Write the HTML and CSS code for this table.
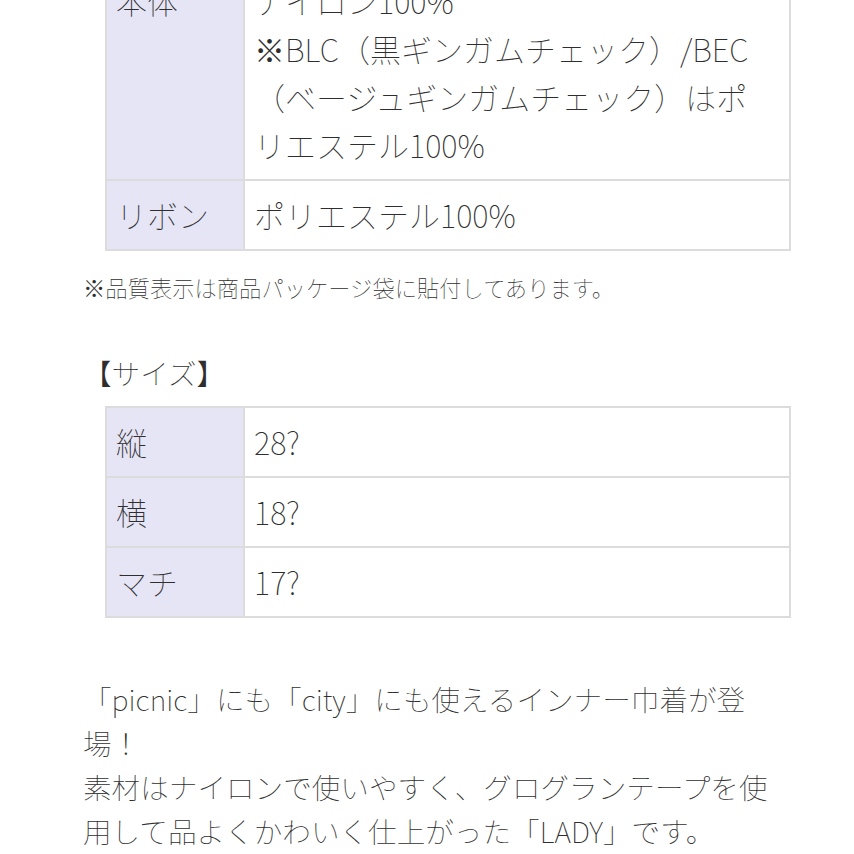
FILE: index.html
```html
<!DOCTYPE html>
<html lang="ja">
<head>
<meta charset="utf-8">
<link rel="stylesheet" href="styles.css">
</head>
<body>
<div class="page">
  <table class="spec">
    <tr>
      <th>本体</th>
      <td>ナイロン100%<br>※BLC（黒ギンガムチェック）/BEC（ベージュギンガムチェック）はポリエステル100%</td>
    </tr>
    <tr>
      <th>リボン</th>
      <td>ポリエステル100%</td>
    </tr>
  </table>
  <p class="note">※品質表示は商品パッケージ袋に貼付してあります。</p>
  <p class="heading">【サイズ】</p>
  <table class="spec">
    <tr><th>縦</th><td>28?</td></tr>
    <tr><th>横</th><td>18?</td></tr>
    <tr><th>マチ</th><td>17?</td></tr>
  </table>
  <p class="desc">「picnic」にも「city」にも使えるインナー巾着が登場！<br>素材はナイロンで使いやすく、グログランテープを使用して品よくかわいく仕上がった「LADY」です。</p>
</div>
</body>
</html>
```
FILE: styles.css
```css
html, body {
  margin: 0;
  padding: 0;
  background: #fff;
}
body {
  font-family: "Noto Sans CJK JP", "Noto Sans", sans-serif;
  font-weight: 100;
  color: #2e2e2e;
  overflow: hidden;
}
.page {
  margin-top: -35px;
  padding: 0 63px 0 83px;
}
.spec {
  margin-left: 22px;
  width: 686px;
  border-collapse: collapse;
  font-size: 31px;
  line-height: 48px;
}
.spec th,
.spec td {
  border: 2px solid #dcdcdc;
  padding: 10px 16px 10px 9px;
  text-align: left;
  vertical-align: top;
  font-weight: 100;
}
.spec th {
  width: 111px;
  background: #e5e5f6;
  white-space: nowrap;
}
.spec td {
  background: #fff;
}
.note {
  margin: 19px 0 0;
  font-size: 22.3px;
  line-height: 34px;
}
.heading {
  margin: 48px 0 0;
  font-size: 28.6px;
  line-height: 42px;
}
.heading + .spec {
  margin-top: 12px;
}
.desc {
  margin: 59px 0 0;
  font-size: 28.6px;
  line-height: 44px;
}
```
